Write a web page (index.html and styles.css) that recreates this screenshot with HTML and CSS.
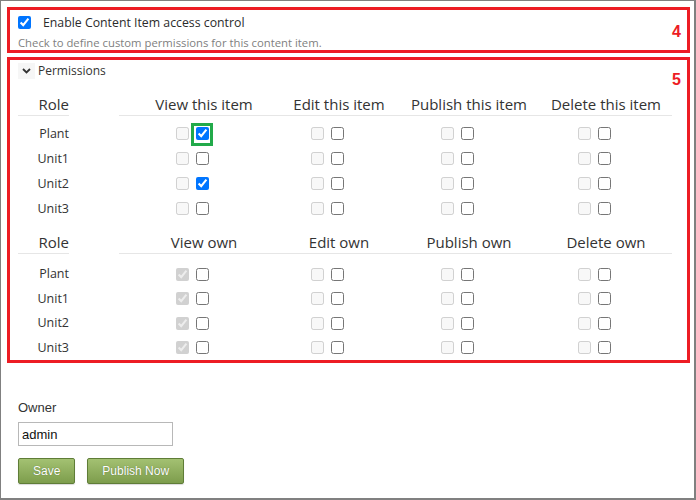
FILE: index.html
```html
<!DOCTYPE html>
<html>
<head>
<meta charset="utf-8">
<link rel="stylesheet" href="styles.css">
</head>
<body>
<div class="frame">
  <section class="box box-access">
    <span class="marker">4</span>
    <label class="enable-row">
      <input type="checkbox" checked>
      <span class="enable-label">Enable Content Item access control</span>
    </label>
    <div class="help">Check to define custom permissions for this content item.</div>
  </section>

  <section class="box box-perms">
    <span class="marker">5</span>
    <div class="perm-toggle">
      <span class="chev"><svg width="9" height="6" viewBox="0 0 9 6"><path d="M1 1 L4.5 4.5 L8 1" fill="none" stroke="#333" stroke-width="1.8"/></svg></span>
      <span class="perm-title">Permissions</span>
    </div>

    <div class="perm-grid perm-head">
      <div class="role-h">Role</div><div></div>
      <div class="col-h">View this item</div>
      <div class="col-h">Edit this item</div>
      <div class="col-h">Publish this item</div>
      <div class="col-h last">Delete this item</div>
    </div>
    <div class="perm-grid perm-body">
      <div class="role">Plant</div><div></div>
      <div class="cbs"><input type="checkbox" disabled><span class="hl"><input type="checkbox" checked></span></div>
      <div class="cbs"><input type="checkbox" disabled><input type="checkbox"></div>
      <div class="cbs"><input type="checkbox" disabled><input type="checkbox"></div>
      <div class="cbs last"><input type="checkbox" disabled><input type="checkbox"></div>

      <div class="role">Unit1</div><div></div>
      <div class="cbs"><input type="checkbox" disabled><input type="checkbox"></div>
      <div class="cbs"><input type="checkbox" disabled><input type="checkbox"></div>
      <div class="cbs"><input type="checkbox" disabled><input type="checkbox"></div>
      <div class="cbs last"><input type="checkbox" disabled><input type="checkbox"></div>

      <div class="role">Unit2</div><div></div>
      <div class="cbs"><input type="checkbox" disabled><input type="checkbox" checked></div>
      <div class="cbs"><input type="checkbox" disabled><input type="checkbox"></div>
      <div class="cbs"><input type="checkbox" disabled><input type="checkbox"></div>
      <div class="cbs last"><input type="checkbox" disabled><input type="checkbox"></div>

      <div class="role">Unit3</div><div></div>
      <div class="cbs"><input type="checkbox" disabled><input type="checkbox"></div>
      <div class="cbs"><input type="checkbox" disabled><input type="checkbox"></div>
      <div class="cbs"><input type="checkbox" disabled><input type="checkbox"></div>
      <div class="cbs last"><input type="checkbox" disabled><input type="checkbox"></div>
    </div>

    <div class="perm-grid perm-head second">
      <div class="role-h">Role</div><div></div>
      <div class="col-h">View own</div>
      <div class="col-h">Edit own</div>
      <div class="col-h">Publish own</div>
      <div class="col-h last">Delete own</div>
    </div>
    <div class="perm-grid perm-body second">
      <div class="role">Plant</div><div></div>
      <div class="cbs"><input type="checkbox" disabled checked><input type="checkbox"></div>
      <div class="cbs"><input type="checkbox" disabled><input type="checkbox"></div>
      <div class="cbs"><input type="checkbox" disabled><input type="checkbox"></div>
      <div class="cbs last"><input type="checkbox" disabled><input type="checkbox"></div>

      <div class="role">Unit1</div><div></div>
      <div class="cbs"><input type="checkbox" disabled checked><input type="checkbox"></div>
      <div class="cbs"><input type="checkbox" disabled><input type="checkbox"></div>
      <div class="cbs"><input type="checkbox" disabled><input type="checkbox"></div>
      <div class="cbs last"><input type="checkbox" disabled><input type="checkbox"></div>

      <div class="role">Unit2</div><div></div>
      <div class="cbs"><input type="checkbox" disabled checked><input type="checkbox"></div>
      <div class="cbs"><input type="checkbox" disabled><input type="checkbox"></div>
      <div class="cbs"><input type="checkbox" disabled><input type="checkbox"></div>
      <div class="cbs last"><input type="checkbox" disabled><input type="checkbox"></div>

      <div class="role">Unit3</div><div></div>
      <div class="cbs"><input type="checkbox" disabled checked><input type="checkbox"></div>
      <div class="cbs"><input type="checkbox" disabled><input type="checkbox"></div>
      <div class="cbs"><input type="checkbox" disabled><input type="checkbox"></div>
      <div class="cbs last"><input type="checkbox" disabled><input type="checkbox"></div>
    </div>
  </section>

  <div class="owner">
    <div class="owner-label">Owner</div>
    <input class="owner-input" type="text" value="admin">
    <div class="actions">
      <button class="btn">Save</button>
      <button class="btn">Publish Now</button>
    </div>
  </div>
</div>
</body>
</html>
```

FILE: styles.css
```css
html, body {
  margin: 0;
  padding: 0;
  background: #fff;
}

.frame {
  box-sizing: border-box;
  width: 696px;
  height: 500px;
  border-style: solid;
  border-color: #808080;
  border-width: 1px 2px 2px 1px;
  background: #fff;
  font-family: "Open Sans", "Noto Sans", sans-serif;
  color: #333;
  overflow: hidden;
}

.box {
  position: relative;
  box-sizing: border-box;
  width: 683px;
  margin-left: 6px;
  border: 3px solid #ed1c24;
}

.marker {
  position: absolute;
  right: 6px;
  font-family: "Liberation Sans", Arial, sans-serif;
  font-weight: bold;
  font-size: 16px;
  line-height: 16px;
  color: #ed1c24;
}

.box-access {
  margin-top: 6px;
  height: 46px;
  padding: 6px 8px 0;
}
.box-access .marker { top: 14px; }

.enable-row {
  display: flex;
  align-items: center;
  height: 13px;
}
.enable-row input {
  margin: 0;
  width: 13px;
  height: 13px;
}
.enable-label {
  margin-left: 12px;
  font-size: 12.3px;
  line-height: 13px;
  color: #2b2b2b;
}

.help {
  margin-top: 7px;
  font-size: 11.3px;
  line-height: 14px;
  color: #808080;
}

.box-perms {
  margin-top: 4px;
  height: 306px;
  padding: 3px 8px 0;
}
.box-perms .marker { top: 12px; }

.perm-toggle {
  display: flex;
  align-items: center;
  height: 16px;
}
.chev {
  display: flex;
  align-items: center;
  justify-content: center;
  width: 17px;
  height: 16px;
  background: #f6f6f6;
}
.perm-title {
  margin-left: 3px;
  font-size: 12px;
  line-height: 16px;
}

.perm-grid {
  display: grid;
  grid-template-columns: 51px 50px 170px 100px 160px 123px;
}

.perm-head {
  margin-top: 15px;
}
.perm-head.second {
  margin-top: 11px;
}
.role-h, .col-h {
  font-size: 15px;
  line-height: 20px;
  padding-bottom: 1px;
  border-bottom: 1px solid #e6e6e6;
  white-space: nowrap;
}
.role-h { text-align: right; }
.col-h { text-align: center; }
.col-h.last { padding-right: 9px; }

.perm-body {
  margin-top: 5px;
  grid-auto-rows: 25px;
}
.perm-body.second {
  margin-top: 8px;
  grid-auto-rows: 24.5px;
}

.role {
  font-size: 12.5px;
  text-align: right;
  align-self: center;
  line-height: 16px;
}

.cbs {
  display: flex;
  align-items: center;
  justify-content: center;
  gap: 7px;
  padding-right: 23px;
}
.cbs.last { padding-right: 32px; }
.cbs input {
  margin: 0;
  width: 13px;
  height: 13px;
}

.hl {
  position: relative;
  display: flex;
}
.hl::after {
  content: "";
  position: absolute;
  top: -4px;
  left: -5px;
  right: -4px;
  bottom: -6px;
  border: 3px solid #22aa4a;
}

.owner {
  margin: 37px 0 0 17px;
  font-family: "Liberation Sans", Arial, sans-serif;
}
.owner-label {
  font-size: 13px;
  line-height: 16px;
  color: #333;
}
.owner-input {
  display: block;
  box-sizing: border-box;
  margin-top: 6px;
  width: 155px;
  height: 24px;
  padding: 0 3px;
  border: 1px solid #b8b8b8;
  border-radius: 0;
  font-family: "Liberation Sans", Arial, sans-serif;
  font-size: 13px;
  color: #111;
  outline: none;
}
.actions {
  display: flex;
  gap: 12px;
  margin-top: 12px;
}
.btn {
  box-sizing: border-box;
  height: 26px;
  padding: 0 14px;
  border: 1px solid #5f7d37;
  border-radius: 2px;
  background: linear-gradient(#a3c172, #7d9d4c);
  color: #fff;
  font-family: "Liberation Sans", Arial, sans-serif;
  font-size: 12px;
  text-shadow: 0 0 1px rgba(40, 60, 20, 0.6);
  box-shadow: 0 1px 1px rgba(0,0,0,0.15);
}
```
